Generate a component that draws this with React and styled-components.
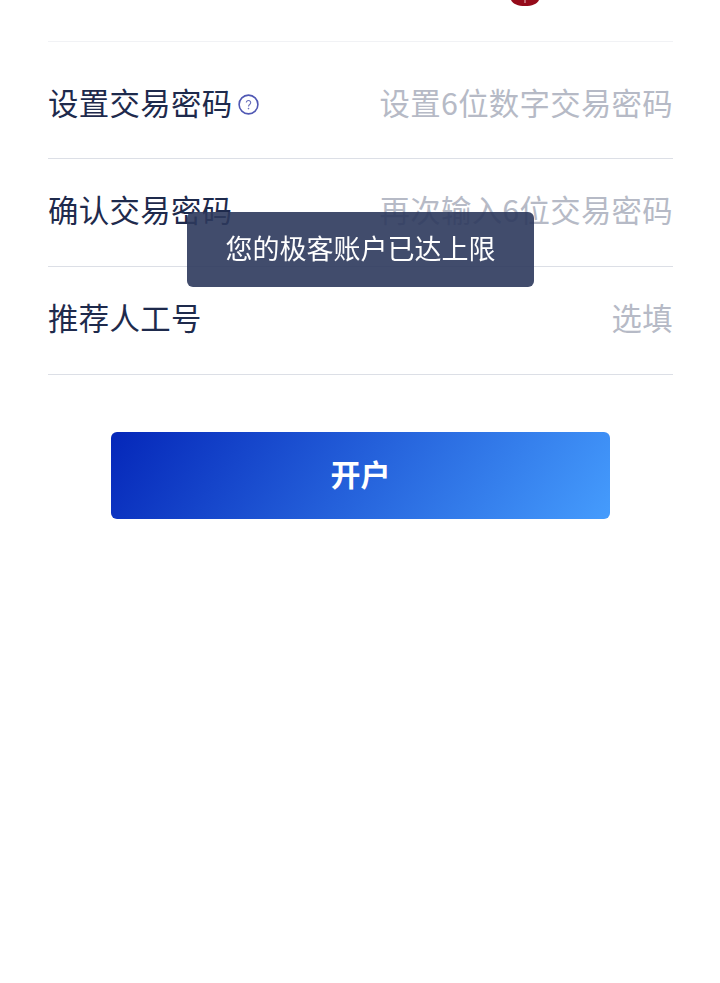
import React from 'react';
import styled, { createGlobalStyle } from 'styled-components';

const FONT = '"Noto Sans CJK SC", "Noto Sans", sans-serif';

/*──────── shells ─────*/
const Global = createGlobalStyle`
  html, body { margin: 0; padding: 0; background: #fff; }
  body { font-family: ${FONT}; overflow: hidden; }
`;

const Page = styled.div`
  width: 720px; height: 983px;
  padding: 0 47px 0 48px;
  box-sizing: border-box;
  background: #fff;
`;

const TopRow = styled.div`
  height: 41px;
  box-sizing: content-box;
  display: flex; justify-content: flex-end; align-items: flex-start;
  padding-right: 134px;
  border-bottom: 1px solid #f1f2f5;
  overflow: hidden;
  margin-bottom: -1px;
`;

const Seal = styled.svg`
  width: 28px; height: 6px; flex: none; display: block;
`;

const Row = styled.div`
  height: ${p => p.$h}px;
  box-sizing: border-box;
  padding: ${p => p.$pt}px 0 ${p => p.$pb}px;
  display: flex; justify-content: space-between; align-items: center;
  border-bottom: 1px solid #dcdfe6;
`;

const Label = styled.div`
  display: flex; align-items: center; gap: 6px;
  font-size: 30.4px; line-height: 40px;
  letter-spacing: .35px;
  color: #1e2a4c;
`;

const Hint = styled.div`
  font-size: 30.4px; line-height: 40px;
  letter-spacing: .3px;
  color: #b6bac6;
`;

const HelpIcon = styled.svg`
  width: 21px; height: 21px; flex: none; margin-top: 5px;
`;

const Submit = styled.button`
  display: block;
  width: 499px; height: 87px;
  margin: 57px 0 0 63px;
  border: 0; border-radius: 6px;
  background: linear-gradient(125deg, #0527b9 0%, #459cfd 100%);
  color: #fff;
  font-family: ${FONT};
  font-size: 30px; font-weight: 700;
  padding: 0 0 6px;
`;

const Toast = styled.div`
  position: fixed;
  left: 187px; top: 212px;
  width: 347px; height: 75px;
  box-sizing: border-box;
  padding-bottom: 5px;
  display: flex; justify-content: center; align-items: center;
  border-radius: 6px;
  background: rgba(44, 56, 92, .9);
  color: #fff;
  font-size: 27px;
`;

/*════════ component ═══════════════════════════════════════*/
export default function App() {
  return (
    <>
      <Global />
      <Page>
        <TopRow>
          <Seal viewBox="0 0 28 6">
            <path d="M0 0h28c-2 4-7 6-14 6S2 4 0 0z" fill="#950a1a" />
            <path d="M14 0v3" stroke="#d9a0a6" strokeWidth="1.2" fill="none" />
          </Seal>
        </TopRow>

        <Row $h={118} $pt={4} $pb={0}>
          <Label>
            设置交易密码
            <HelpIcon viewBox="0 0 21 21">
              <circle cx="10.5" cy="10.5" r="9.4" fill="none" stroke="#5058b4" strokeWidth="1.6" />
              <path d="M8.3 8.6a2.2 2.2 0 1 1 3.4 1.9c-.8.5-1.2.9-1.2 1.9" fill="none" stroke="#6a70bd" strokeWidth="1.1" />
              <circle cx="10.5" cy="14.6" r=".8" fill="#6a70bd" />
            </HelpIcon>
          </Label>
          <Hint>设置6位数字交易密码</Hint>
        </Row>

        <Row $h={108} $pt={0} $pb={8}>
          <Label>确认交易密码</Label>
          <Hint>再次输入6位交易密码</Hint>
        </Row>

        <Row $h={108} $pt={0} $pb={8}>
          <Label>推荐人工号</Label>
          <Hint>选填</Hint>
        </Row>

        <Submit>开户</Submit>
      </Page>
      <Toast>您的极客账户已达上限</Toast>
    </>
  );
}
